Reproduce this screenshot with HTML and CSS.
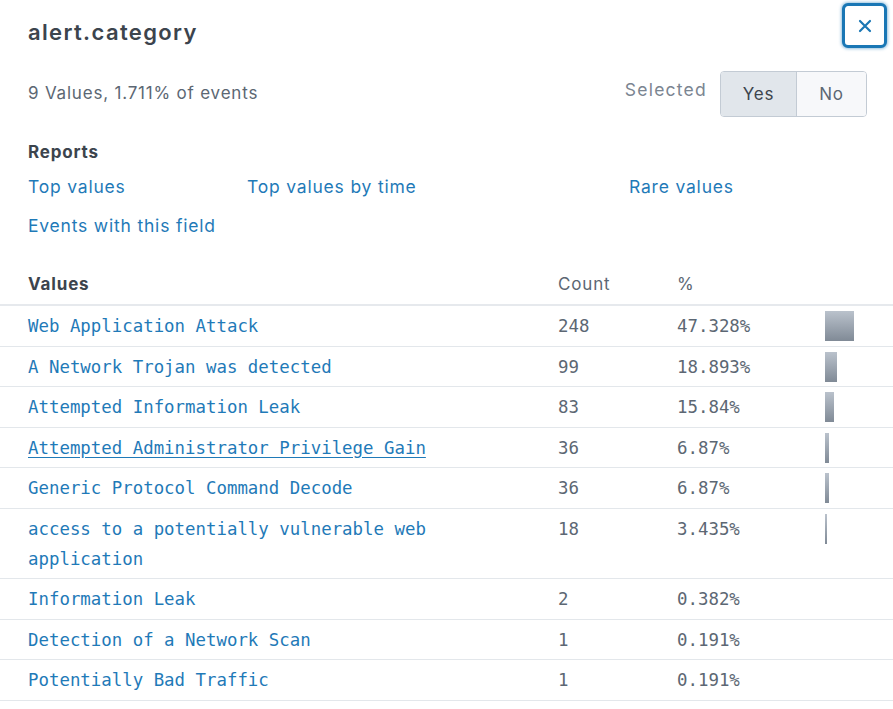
FILE: index.html
```html
<!DOCTYPE html>
<html lang="en">
<head>
<meta charset="utf-8">
<title>alert.category</title>
<link rel="stylesheet" href="styles.css">
</head>
<body>
<div class="popup">
  <div class="head">
    <h1 class="title">alert.category</h1>
    <button class="close" aria-label="Close">
      <svg width="14" height="14" viewBox="0 0 14 14"><path d="M2 2 L12 12 M12 2 L2 12" stroke="#1a77b5" stroke-width="2.2" stroke-linecap="round" fill="none"/></svg>
    </button>
  </div>
  <div class="summary">
    <span class="stats">9 Values, 1.711% of events</span>
    <div class="selected">
      <span class="sel-label">Selected</span>
      <div class="toggle">
        <span class="seg seg-on">Yes</span>
        <span class="seg seg-off">No</span>
      </div>
    </div>
  </div>
  <div class="reports">
    <h2 class="reports-title">Reports</h2>
    <div class="report-links">
      <a class="link" href="#">Top values</a>
      <a class="link" href="#">Top values by time</a>
      <a class="link" href="#">Rare values</a>
      <a class="link" href="#">Events with this field</a>
    </div>
  </div>
  <table class="values">
    <colgroup>
      <col class="c-val"><col class="c-count"><col class="c-pct"><col class="c-bar">
    </colgroup>
    <thead>
      <tr><th class="th-val">Values</th><th class="th-num">Count</th><th class="th-num">%</th><th></th></tr>
    </thead>
    <tbody>
      <tr><td class="val"><a href="#">Web Application Attack</a></td><td class="num">248</td><td class="num">47.328%</td><td class="barcell"><span class="bar" style="width:29px"></span></td></tr>
      <tr><td class="val"><a href="#">A Network Trojan was detected</a></td><td class="num">99</td><td class="num">18.893%</td><td class="barcell"><span class="bar" style="width:12px"></span></td></tr>
      <tr><td class="val"><a href="#">Attempted Information Leak</a></td><td class="num">83</td><td class="num">15.84%</td><td class="barcell"><span class="bar" style="width:9px"></span></td></tr>
      <tr><td class="val"><a href="#" class="hover">Attempted Administrator Privilege Gain</a></td><td class="num">36</td><td class="num">6.87%</td><td class="barcell"><span class="bar" style="width:4px"></span></td></tr>
      <tr><td class="val"><a href="#">Generic Protocol Command Decode</a></td><td class="num">36</td><td class="num">6.87%</td><td class="barcell"><span class="bar" style="width:4px"></span></td></tr>
      <tr><td class="val"><a href="#">access to a potentially vulnerable web application</a></td><td class="num">18</td><td class="num">3.435%</td><td class="barcell"><span class="bar" style="width:1.5px"></span></td></tr>
      <tr><td class="val"><a href="#">Information Leak</a></td><td class="num">2</td><td class="num">0.382%</td><td class="barcell"></td></tr>
      <tr><td class="val"><a href="#">Detection of a Network Scan</a></td><td class="num">1</td><td class="num">0.191%</td><td class="barcell"></td></tr>
      <tr><td class="val"><a href="#">Potentially Bad Traffic</a></td><td class="num">1</td><td class="num">0.191%</td><td class="barcell"></td></tr>
    </tbody>
  </table>
</div>
</body>
</html>
```
FILE: styles.css
```css
html, body {
  margin: 0;
  padding: 0;
  background: #ffffff;
}
body {
  font-family: Inter, "Open Sans", sans-serif;
  color: #3c444d;
  letter-spacing: 0.05em;
}
.popup {
  width: 893px;
}
.head {
  display: flex;
  justify-content: space-between;
  align-items: flex-start;
  padding: 3px 6px 0 28px;
}
.title {
  margin: 16px 0 0;
  font-size: 22px;
  font-weight: 600;
  line-height: 26px;
  letter-spacing: 0.062em;
  color: #3c444d;
}
.close {
  width: 45px;
  height: 45px;
  box-sizing: border-box;
  border: 3px solid #1a77b5;
  border-radius: 6px;
  background: #fff;
  box-shadow: 0 0 3px 1px rgba(26, 119, 181, 0.45);
  display: flex;
  align-items: center;
  justify-content: center;
  padding: 0;
}
.summary {
  display: flex;
  justify-content: space-between;
  align-items: center;
  padding: 23px 26px 0 28px;
}
.stats {
  font-size: 17px;
  color: #5c6773;
  margin-top: -3px;
}
.selected {
  display: flex;
  align-items: center;
  gap: 13px;
}
.sel-label {
  font-size: 17.5px;
  letter-spacing: 0.07em;
  color: #7b8591;
  margin-top: -9px;
}
.toggle {
  display: flex;
  border: 1px solid #c3cbd4;
  border-radius: 4px;
  overflow: hidden;
  height: 46px;
  box-sizing: border-box;
}
.seg {
  display: flex;
  align-items: center;
  justify-content: center;
  font-size: 17px;
  color: #3c444d;
}
.seg-on {
  width: 75px;
  background: #e1e6eb;
  border-right: 1px solid #c3cbd4;
}
.seg-off {
  width: 69px;
  background: #f7f8fa;
  color: #5c6773;
}
.reports {
  padding: 23px 28px 0 28px;
}
.reports-title {
  margin: 0;
  font-size: 17px;
  font-weight: 700;
  line-height: 24px;
  color: #3c444d;
}
.report-links {
  display: grid;
  grid-template-columns: 219px 382px auto;
  row-gap: 15px;
  margin-top: 11px;
}
.link {
  font-size: 17.5px;
  line-height: 24px;
  color: #1f7ab8;
  text-decoration: none;
  justify-self: start;
}
.values {
  width: 893px;
  margin-top: 27px;
  border-collapse: collapse;
  table-layout: fixed;
  letter-spacing: 0;
}
.c-val { width: 548px; }
.c-count { width: 119px; }
.c-pct { width: 148px; }
.c-bar { width: 78px; }
.values th {
  text-align: left;
  font-size: 17px;
  line-height: 24px;
  letter-spacing: 0.05em;
  padding: 7px 0 8px 10px;
  border-bottom: 2px solid #e6e9ed;
}
.th-val {
  font-weight: 700;
  color: #3c444d;
  padding-left: 28px !important;
}
.th-num {
  font-weight: 400;
  color: #5c6773;
}
.values td {
  vertical-align: top;
  padding: 5px 0 4.5px 10px;
  line-height: 30px;
  border-bottom: 1px solid #e3e7eb;
  font-family: "DejaVu Sans Mono", monospace;
  font-size: 17.4px;
}
.values td.val {
  padding-left: 28px;
  padding-right: 20px;
}
.val a {
  color: #1f7ab8;
  text-decoration: none;
}
.val a.hover {
  text-decoration: underline;
  text-underline-offset: 3px;
}
.num {
  color: #5c6773;
}
.barcell {
  padding-left: 10px !important;
}
.bar {
  display: block;
  height: 30px;
  background: linear-gradient(#bac2cc, #808a96);
}
```
